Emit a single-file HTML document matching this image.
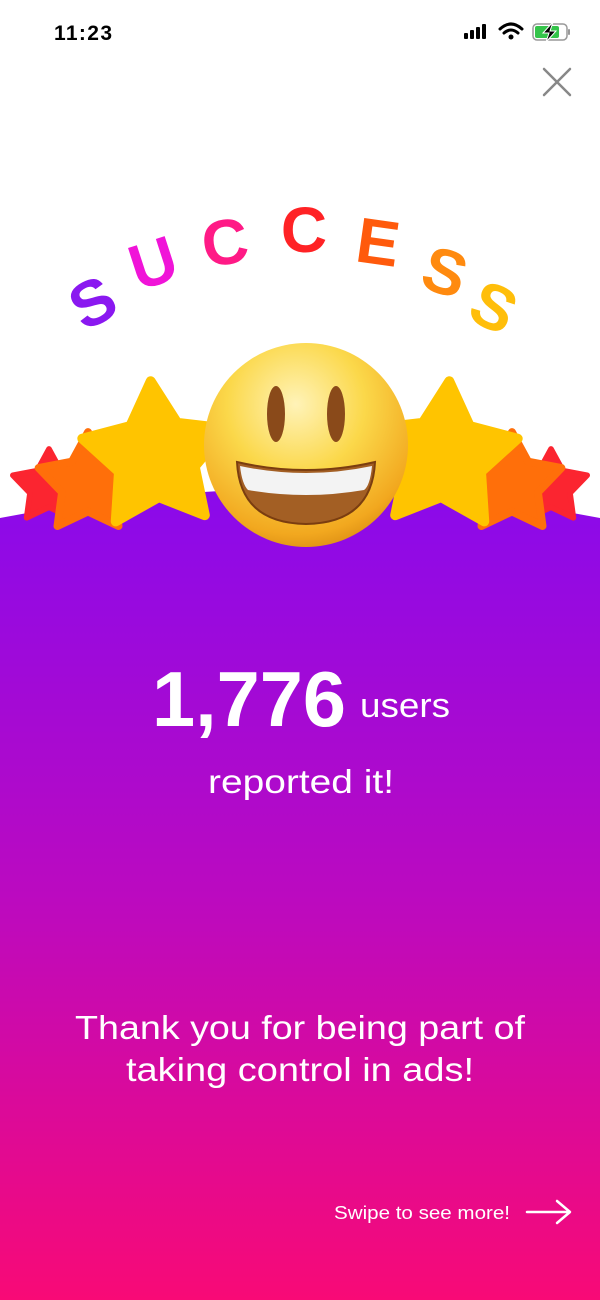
<!DOCTYPE html>
<html><head><meta charset="utf-8"><style>
html,body{margin:0;padding:0;width:600px;height:1300px;overflow:hidden;background:#fff;font-family:"Liberation Sans",sans-serif}
svg{position:absolute;left:0;top:0}
</style></head><body>
<svg width="600" height="1300" viewBox="0 0 600 1300" xmlns="http://www.w3.org/2000/svg">
<defs>
<linearGradient id="bg" x1="0" y1="490" x2="0" y2="1300" gradientUnits="userSpaceOnUse">
<stop offset="0" stop-color="#8a0aeb"/><stop offset="0.5" stop-color="#bb0ac0"/><stop offset="1" stop-color="#f80a76"/>
</linearGradient>
<radialGradient id="face" cx="0.45" cy="0.3" r="0.75">
<stop offset="0" stop-color="#fff3b8"/><stop offset="0.45" stop-color="#fbd84a"/><stop offset="0.85" stop-color="#f2a81f"/><stop offset="1" stop-color="#d98a12"/>
</radialGradient>
</defs>
<path d="M0,518 Q300,460 600,518 L600,1300 L0,1300 Z" fill="url(#bg)"/>
<g stroke-linejoin="round">
<polygon transform="translate(49,487) scale(38)" points="0,-1 0.31,-0.43 0.951,-0.309 0.5,0.16 0.588,0.809 0,0.53 -0.588,0.809 -0.5,0.16 -0.951,-0.309 -0.31,-0.43" fill="#fb2530" stroke="#fb2530" stroke-width="0.15"/>
<polygon transform="translate(551,487) scale(38)" points="0,-1 0.31,-0.43 0.951,-0.309 0.5,0.16 0.588,0.809 0,0.53 -0.588,0.809 -0.5,0.16 -0.951,-0.309 -0.31,-0.43" fill="#fb2530" stroke="#fb2530" stroke-width="0.15"/>
<polygon transform="translate(88,484) scale(52)" points="0,-1 0.31,-0.43 0.951,-0.309 0.5,0.16 0.588,0.809 0,0.53 -0.588,0.809 -0.5,0.16 -0.951,-0.309 -0.31,-0.43" fill="#ff6f0a" stroke="#ff6f0a" stroke-width="0.15"/>
<polygon transform="translate(512,484) scale(52)" points="0,-1 0.31,-0.43 0.951,-0.309 0.5,0.16 0.588,0.809 0,0.53 -0.588,0.809 -0.5,0.16 -0.951,-0.309 -0.31,-0.43" fill="#ff6f0a" stroke="#ff6f0a" stroke-width="0.15"/>
<polygon transform="translate(156,457) rotate(-4) scale(76)" points="0,-1 0.31,-0.43 0.951,-0.309 0.5,0.16 0.588,0.809 0,0.53 -0.588,0.809 -0.5,0.16 -0.951,-0.309 -0.31,-0.43" fill="#ffc400" stroke="#ffc400" stroke-width="0.13"/>
<polygon transform="translate(444,457) rotate(4) scale(76)" points="0,-1 0.31,-0.43 0.951,-0.309 0.5,0.16 0.588,0.809 0,0.53 -0.588,0.809 -0.5,0.16 -0.951,-0.309 -0.31,-0.43" fill="#ffc400" stroke="#ffc400" stroke-width="0.13"/>
</g>
<ellipse cx="306" cy="445" rx="102" ry="102" fill="url(#face)"/>
<ellipse cx="276" cy="414" rx="9" ry="28" fill="#8a4a1a"/>
<ellipse cx="336" cy="414" rx="9" ry="28" fill="#8a4a1a"/>
<path d="M237,462 Q306,478 375,462 Q372,523 306,524 Q240,523 237,462 Z" fill="#a35f24" stroke="#7a3d10" stroke-width="2"/>
<path d="M240,466 Q306,480 372,466 Q370,486 364,490 Q306,500 248,490 Q242,484 240,466 Z" fill="#f3f3f3"/>
<g font-family="Liberation Sans, sans-serif" font-weight="bold" font-size="64" text-anchor="middle">
<text transform="translate(103,322) rotate(-28)" fill="#8a18f0">S</text>
<text transform="translate(160,284) rotate(-18)" fill="#f014d8">U</text>
<text transform="translate(228,264) rotate(-8)" fill="#ff1a86">C</text>
<text transform="translate(304,252) rotate(0)" fill="#ff2225">C</text>
<text transform="translate(375,264) rotate(8)" fill="#ff5a0c">E</text>
<text transform="translate(438,293) rotate(18)" fill="#ff8a0f">S</text>
<text transform="translate(484,327) rotate(26)" fill="#ffbe0a">S</text>
</g>
<text x="54" y="40" font-size="21" font-weight="bold" fill="#000" textLength="58">11:23</text>
<g fill="#000">
<rect x="464" y="33" width="4" height="6" rx="1"/><rect x="470" y="30" width="4" height="9" rx="1"/><rect x="476" y="27" width="4" height="12" rx="1"/><rect x="482" y="24" width="4" height="15" rx="1"/>
</g>
<g fill="none" stroke="#000" stroke-width="3" stroke-linecap="round">
<path d="M500,29 Q511,19 522,29"/><path d="M504,33 Q511,27 518,33"/>
</g>
<circle cx="511" cy="37" r="2.5" fill="#000"/>
<rect x="533" y="24" width="34" height="16" rx="4" fill="none" stroke="#999" stroke-width="1.5"/>
<rect x="535" y="26" width="24" height="12" rx="2" fill="#34c44a"/>
<rect x="568" y="29" width="2" height="6" rx="1" fill="#999"/>
<path d="M553,22 L543,33 L549,33 L546,42 L556,31 L550,31 Z" fill="#000" stroke="#fff" stroke-width="1"/>
<path d="M544,69 L570,95 M570,69 L544,95" stroke="#888" stroke-width="2.5" stroke-linecap="round"/>
<g fill="#fff" font-family="Liberation Sans, sans-serif">
<text x="152" y="726" font-size="78" font-weight="bold" textLength="194" lengthAdjust="spacingAndGlyphs">1,776</text>
<text x="360" y="717" font-size="34" textLength="90" lengthAdjust="spacingAndGlyphs">users</text>
<text x="208" y="793" font-size="33" textLength="186" lengthAdjust="spacingAndGlyphs">reported it!</text>
<text x="75" y="1039" font-size="33" textLength="450" lengthAdjust="spacingAndGlyphs">Thank you for being part of</text>
<text x="126" y="1081" font-size="33" textLength="348" lengthAdjust="spacingAndGlyphs">taking control in ads!</text>
<text x="334" y="1219" font-size="18" textLength="176" lengthAdjust="spacingAndGlyphs">Swipe to see more!</text>
</g>
<path d="M527,1212 L569,1212 M557,1201 L570,1212 L557,1223" stroke="#fff" stroke-width="2.5" fill="none" stroke-linecap="round" stroke-linejoin="round"/>
</svg>
</body></html>
